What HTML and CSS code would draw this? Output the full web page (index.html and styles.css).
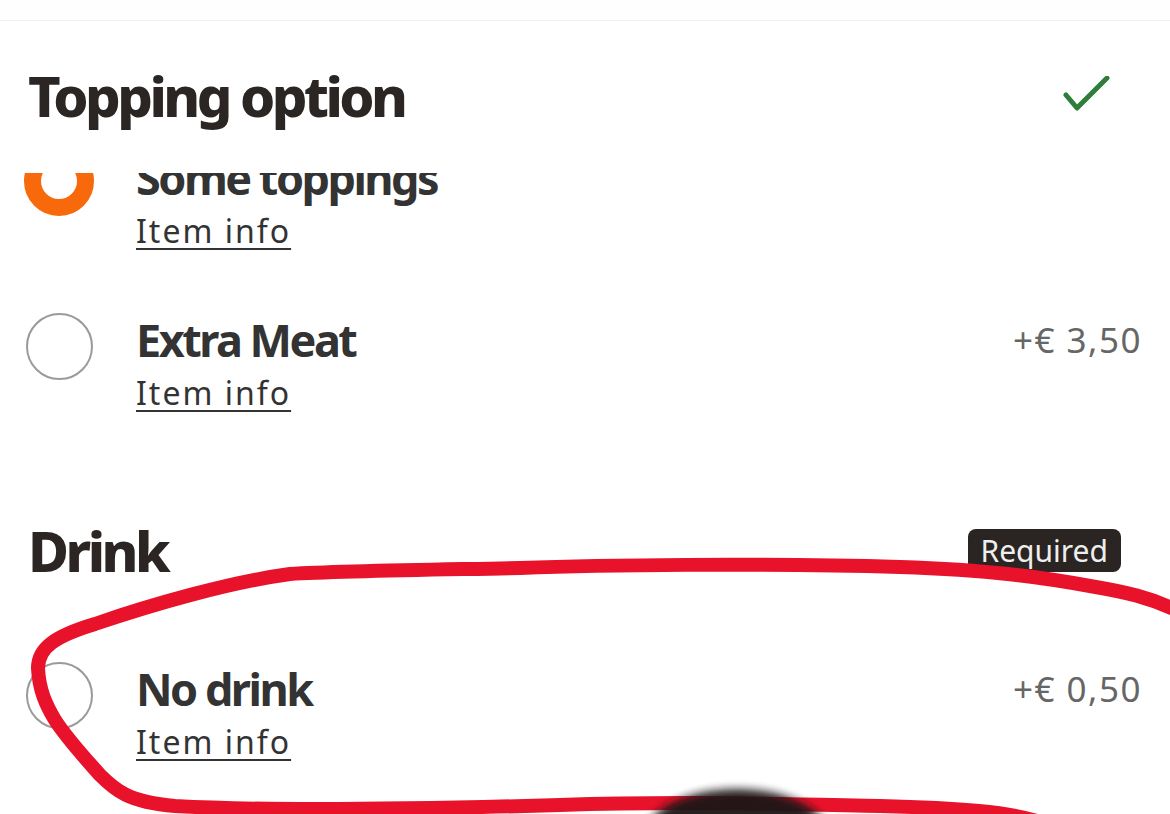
FILE: index.html
```html
<!DOCTYPE html>
<html lang="en">
<head>
<meta charset="utf-8">
<title>Topping option</title>
<link rel="stylesheet" href="styles.css">
</head>
<body>
<div class="screen">
  <div class="topbar"></div>
  <header class="section-head first">
    <h2 class="section-title">Topping option</h2>
    <svg class="check" width="50" height="40" viewBox="0 0 50 40" aria-hidden="true">
      <path d="M4 19 L15 32 L45 2" fill="none" stroke="#2f7d3a" stroke-width="5" stroke-linecap="round" stroke-linejoin="round"/>
    </svg>
  </header>
  <div class="scroller">
    <div class="list">
      <div class="option">
        <span class="radio selected"></span>
        <div class="option-text">
          <div class="option-name">Some toppings</div>
          <a class="item-info" href="#">Item info</a>
        </div>
      </div>
      <div class="option">
        <span class="radio"></span>
        <div class="option-text">
          <div class="option-name">Extra Meat</div>
          <a class="item-info" href="#">Item info</a>
        </div>
        <div class="price">+€ 3,50</div>
      </div>
      <div class="section-head drink">
        <h2 class="section-title">Drink</h2>
        <span class="badge">Required</span>
      </div>
      <div class="option">
        <span class="radio"></span>
        <div class="option-text">
          <div class="option-name">No drink</div>
          <a class="item-info" href="#">Item info</a>
        </div>
        <div class="price">+€ 0,50</div>
      </div>
    </div>
  </div>
  <svg class="scribble" width="1170" height="814" viewBox="0 0 1170 814" aria-hidden="true">
    <defs>
      <filter id="soft" x="-20%" y="-20%" width="140%" height="140%">
        <feGaussianBlur stdDeviation="4"/>
      </filter>
    </defs>
    <path d="M1180 612 C1150 597 1125 592 1090 586 C1040 577 990 570 900 567 C760 563 600 565 520 568 C420 570 340 571 290 574 C230 582 150 605 95 624 C55 636 38 648 38 668 C39 690 46 705 55 720 C68 740 85 758 100 775 C115 790 128 802 175 806 C265 811 420 809 560 805 C680 801 780 804 880 806 C960 808 1010 812 1040 822" fill="none" stroke="#e8132b" stroke-width="14" stroke-linecap="round" stroke-linejoin="round"/>
    <ellipse cx="737" cy="836" rx="92" ry="47" fill="#1d1315" opacity="0.95" filter="url(#soft)"/>
  </svg>
</div>
</body>
</html>
```

FILE: styles.css
```css
* {
  box-sizing: border-box;
}

html, body {
  margin: 0;
  padding: 0;
  background: #ffffff;
}

body {
  font-family: "Noto Sans", "Open Sans", "Liberation Sans", sans-serif;
  color: #333333;
}

.screen {
  position: relative;
  width: 1170px;
  height: 814px;
  overflow: hidden;
  background: #ffffff;
}

.topbar {
  height: 21px;
  border-bottom: 1px solid #f1f1f1;
  background: #fefefe;
}

.section-head {
  display: flex;
  align-items: center;
  justify-content: space-between;
  padding: 0 30px 0 28px;
}

.section-head.first {
  padding-top: 41px;
  padding-bottom: 44px;
  padding-right: 58px;
}

.section-title {
  margin: 0;
  font-size: 56px;
  line-height: 67px;
  font-weight: 800;
  color: #2b2523;
  letter-spacing: -3.5px;
}

.check {
  display: block;
}

.scroller {
  overflow: hidden;
  height: 641px;
}

.list {
  margin-top: -42.5px;
}

.option {
  display: flex;
  align-items: flex-start;
  padding: 20px 28px 40px 26px;
  height: 162px;
}

.radio {
  flex: none;
  width: 67px;
  height: 67px;
  border: 2px solid #9a9a9a;
  border-radius: 50%;
  background: #ffffff;
}

.radio.selected {
  width: 70px;
  height: 70px;
  margin-top: -5px;
  margin-left: -2px;
  margin-right: -1px;
  border: 17px solid #f7690a;
}

.option-text {
  flex: 1;
  margin-left: 43px;
  display: flex;
  flex-direction: column;
  align-items: flex-start;
}

.option-name {
  font-size: 45px;
  line-height: 54px;
  font-weight: 700;
  color: #333333;
  letter-spacing: -2.5px;
}

.item-info {
  margin-top: 4px;
  font-size: 32px;
  line-height: 44px;
  color: #333333;
  text-decoration: underline;
  text-decoration-thickness: 2px;
  text-underline-offset: 5px;
  letter-spacing: 2px;
}

.price {
  flex: none;
  font-size: 35px;
  line-height: 54px;
  color: #666666;
  letter-spacing: 1.5px;
}

.section-head.drink {
  margin-top: 62px;
  padding-bottom: 58px;
}

.badge {
  margin-right: 19px;
  height: 43px;
  padding: 0 13px;
  display: flex;
  align-items: center;
  background: #2a2422;
  color: #eeeeee;
  border-radius: 8px;
  font-size: 30px;
  line-height: 43px;
}

.scribble {
  position: absolute;
  left: 0;
  top: 0;
  pointer-events: none;
}
```
